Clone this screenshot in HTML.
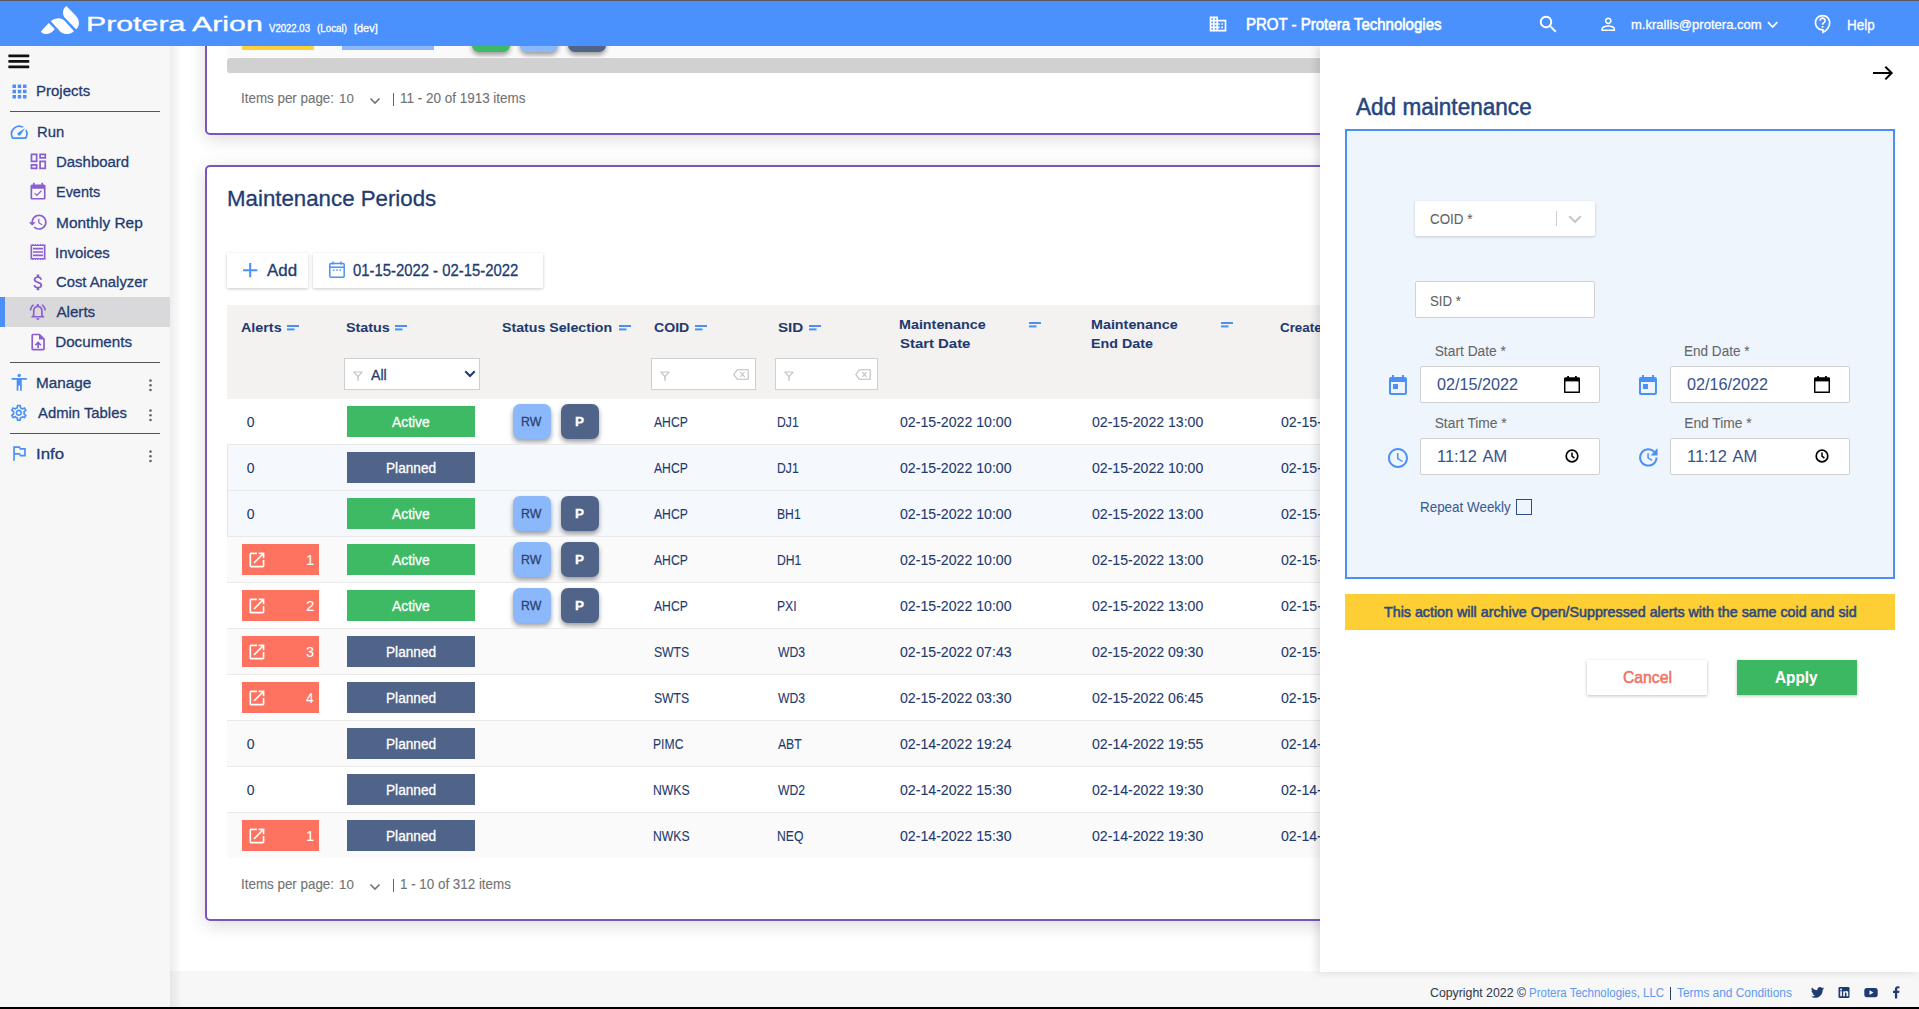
<!DOCTYPE html>
<html><head><meta charset="utf-8"><style>
*{box-sizing:border-box;margin:0;padding:0}
html,body{width:1919px;height:1009px;overflow:hidden;background:#fff;font-family:"Liberation Sans",sans-serif}
body{position:relative}
.a{position:absolute;display:block}
.t{position:absolute;white-space:nowrap;transform-origin:0 0;-webkit-text-stroke:0.3px currentColor}
</style></head><body>
<div class="a" style="left:205px;top:-300px;width:1690px;height:435px;border:2px solid #7a55c2;border-radius:5px;background:#fff;box-shadow:0 4px 18px rgba(0,0,0,0.14)"></div>
<div class="a" style="left:227px;top:40px;width:1100px;height:17px;background:#fafafa;"></div>
<div class="a" style="left:242px;top:40px;width:72px;height:10px;background:#fdd035;"></div>
<div class="a" style="left:342px;top:40px;width:92px;height:10px;background:#8ab8fb;"></div>
<div class="a" style="left:472px;top:17px;width:38px;height:35px;border-radius:7px;background:#3dba63;box-shadow:0 3px 5px rgba(0,0,0,0.38)"></div>
<div class="a" style="left:520px;top:17px;width:38px;height:35px;border-radius:7px;background:#8ab8fb;box-shadow:0 3px 5px rgba(0,0,0,0.38)"></div>
<div class="a" style="left:568px;top:17px;width:38px;height:35px;border-radius:7px;background:#506389;box-shadow:0 3px 5px rgba(0,0,0,0.38)"></div>
<div class="a" style="left:227px;top:58px;width:1100px;height:15px;border-radius:3px;background:#d1d1d1"></div>
<div class="t" style="left:241.09px;top:89.92px;font-size:13.80px;line-height:17px;color:#727272;font-weight:400;transform:scaleX(0.9705);-webkit-text-stroke:0.1px currentColor;">Items per page:</div>
<div class="t" style="left:339.00px;top:91.23px;font-size:13.20px;line-height:16px;color:#727272;font-weight:400;transform:scaleX(1.0076);-webkit-text-stroke:0.1px currentColor;">10</div>
<svg class="a" style="left:369px;top:96.7px;" width="12" height="8" viewBox="0 0 12 8"><path d="M1.5 1.5 L6 6 L10.5 1.5" fill="none" stroke="#727272" stroke-width="1.6"/></svg>
<div class="a" style="left:392.6px;top:92.7px;width:1.1px;height:13px;background:#666;"></div>
<div class="t" style="left:400.09px;top:89.92px;font-size:13.80px;line-height:17px;color:#727272;font-weight:400;transform:scaleX(0.9764);-webkit-text-stroke:0.1px currentColor;">11 - 20 of 1913 items</div>
<div class="a" style="left:205px;top:165px;width:1690px;height:756px;border:2px solid #7a55c2;border-radius:5px;background:#fff;box-shadow:0 4px 18px rgba(0,0,0,0.14)"></div>
<div class="t" style="left:227.02px;top:185.37px;font-size:22.60px;line-height:28px;color:#1f3c72;font-weight:400;transform:scaleX(0.9856);">Maintenance Periods</div>
<div class="a" style="left:227px;top:253px;width:81px;height:35px;background:#fff;box-shadow:0 1px 3px rgba(0,0,0,0.22)"></div>
<div class="a" style="left:313px;top:253px;width:230px;height:35px;background:#fff;box-shadow:0 1px 3px rgba(0,0,0,0.22)"></div>
<svg class="a" style="left:237.89px;top:257.64px;" width="24.43" height="24.43" viewBox="0 0 24 24"><path fill="#4a90f7" d="M19 13h-6v6h-2v-6H5v-2h6V5h2v6h6v2z"/></svg>
<div class="t" style="left:267.00px;top:260.66px;font-size:16.00px;line-height:20px;color:#1f3c72;font-weight:400;transform:scaleX(1.0569);">Add</div>
<svg class="a" style="left:329px;top:261px;" width="16" height="17" viewBox="0 0 16 17"><g fill="none" stroke="#4a90f7" stroke-width="1.5"><rect x="0.8" y="2.6" width="14.4" height="13.6" rx="1.2"/><path d="M0.8 6.2 H15.2"/><path d="M4 0.4 V3.6 M12 0.4 V3.6"/></g><g fill="#4a90f7"><rect x="4" y="8.4" width="1.6" height="1.4"/><rect x="7.2" y="8.4" width="1.6" height="1.4"/><rect x="10.4" y="8.4" width="1.6" height="1.4"/></g></svg>
<div class="t" style="left:353.41px;top:260.39px;font-size:16.20px;line-height:20px;color:#1f3c72;font-weight:400;transform:scaleX(0.9178);">01-15-2022 - 02-15-2022</div>
<div class="a" style="left:227px;top:305px;width:1100px;height:94px;background:#f3f2f1;"></div>
<div class="t" style="left:240.64px;top:319.09px;font-size:13.60px;line-height:17px;color:#1f3a70;font-weight:700;transform:scaleX(1.0538);-webkit-text-stroke:0.05px currentColor;">Alerts</div>
<svg class="a" style="left:287px;top:324.8px;" width="12" height="6" viewBox="0 0 12 6"><g fill="#4a90f7"><rect x="0" y="0" width="12" height="2"/><rect x="0" y="3.4" width="7.5" height="2"/></g></svg>
<div class="t" style="left:346.07px;top:319.09px;font-size:13.60px;line-height:17px;color:#1f3a70;font-weight:700;transform:scaleX(1.0543);-webkit-text-stroke:0.05px currentColor;">Status</div>
<svg class="a" style="left:395px;top:324.8px;" width="12" height="6" viewBox="0 0 12 6"><g fill="#4a90f7"><rect x="0" y="0" width="12" height="2"/><rect x="0" y="3.4" width="7.5" height="2"/></g></svg>
<div class="t" style="left:501.98px;top:319.09px;font-size:13.60px;line-height:17px;color:#1f3a70;font-weight:700;transform:scaleX(1.0413);-webkit-text-stroke:0.05px currentColor;">Status Selection</div>
<svg class="a" style="left:619px;top:324.8px;" width="12" height="6" viewBox="0 0 12 6"><g fill="#4a90f7"><rect x="0" y="0" width="12" height="2"/><rect x="0" y="3.4" width="7.5" height="2"/></g></svg>
<div class="t" style="left:653.54px;top:319.09px;font-size:13.60px;line-height:17px;color:#1f3a70;font-weight:700;transform:scaleX(1.0361);-webkit-text-stroke:0.05px currentColor;">COID</div>
<svg class="a" style="left:695px;top:324.8px;" width="12" height="6" viewBox="0 0 12 6"><g fill="#4a90f7"><rect x="0" y="0" width="12" height="2"/><rect x="0" y="3.4" width="7.5" height="2"/></g></svg>
<div class="t" style="left:777.54px;top:319.09px;font-size:13.60px;line-height:17px;color:#1f3a70;font-weight:700;transform:scaleX(1.1156);-webkit-text-stroke:0.05px currentColor;">SID</div>
<svg class="a" style="left:809px;top:324.8px;" width="12" height="6" viewBox="0 0 12 6"><g fill="#4a90f7"><rect x="0" y="0" width="12" height="2"/><rect x="0" y="3.4" width="7.5" height="2"/></g></svg>
<div class="t" style="left:899.07px;top:315.79px;font-size:13.60px;line-height:17px;color:#1f3a70;font-weight:700;transform:scaleX(1.0532);-webkit-text-stroke:0.05px currentColor;">Maintenance</div>
<svg class="a" style="left:1029px;top:322.3px;" width="12" height="6" viewBox="0 0 12 6"><g fill="#4a90f7"><rect x="0" y="0" width="12" height="2"/><rect x="0" y="3.4" width="7.5" height="2"/></g></svg>
<div class="t" style="left:899.55px;top:334.59px;font-size:13.60px;line-height:17px;color:#1f3a70;font-weight:700;transform:scaleX(1.0966);-webkit-text-stroke:0.05px currentColor;">Start Date</div>
<div class="t" style="left:1091.07px;top:315.79px;font-size:13.60px;line-height:17px;color:#1f3a70;font-weight:700;transform:scaleX(1.0532);-webkit-text-stroke:0.05px currentColor;">Maintenance</div>
<svg class="a" style="left:1221px;top:322.3px;" width="12" height="6" viewBox="0 0 12 6"><g fill="#4a90f7"><rect x="0" y="0" width="12" height="2"/><rect x="0" y="3.4" width="7.5" height="2"/></g></svg>
<div class="t" style="left:1091.07px;top:334.59px;font-size:13.60px;line-height:17px;color:#1f3a70;font-weight:700;transform:scaleX(1.0504);-webkit-text-stroke:0.05px currentColor;">End Date</div>
<div class="t" style="left:1280.07px;top:319.09px;font-size:13.60px;line-height:17px;color:#1f3a70;font-weight:700;transform:scaleX(0.9831);-webkit-text-stroke:0.05px currentColor;">Created</div>
<div class="a" style="left:344px;top:358px;width:136px;height:32px;background:#fff;border:1px solid #cfcfcf"></div>
<svg class="a" style="left:353px;top:371px;" width="10" height="11" viewBox="0 0 10 11"><path d="M0.9 1 H9.1 L5 5.6 Z" fill="none" stroke="#c6c6c6" stroke-width="1.2" stroke-linejoin="round"/><path d="M5 5.2 V9.8" stroke="#c6c6c6" stroke-width="1.5"/></svg>
<div class="t" style="left:370.60px;top:365.40px;font-size:15.00px;line-height:19px;color:#1f3a70;font-weight:400;transform:scaleX(0.9442);">All</div>
<svg class="a" style="left:464px;top:370px;" width="12" height="8" viewBox="0 0 12 8"><path d="M1.3 1.3 L6 6 L10.7 1.3" fill="none" stroke="#1f3a70" stroke-width="2"/></svg>
<div class="a" style="left:651px;top:358px;width:105px;height:32px;background:#fff;border:1px solid #cfcfcf"></div>
<svg class="a" style="left:660px;top:371px;" width="10" height="11" viewBox="0 0 10 11"><path d="M0.9 1 H9.1 L5 5.6 Z" fill="none" stroke="#c6c6c6" stroke-width="1.2" stroke-linejoin="round"/><path d="M5 5.2 V9.8" stroke="#c6c6c6" stroke-width="1.5"/></svg>
<svg class="a" style="left:733px;top:369px;" width="16" height="11" viewBox="0 0 16 11"><path d="M4.5 0.7 H15.2 V10.3 H4.5 L0.7 5.5 Z" fill="none" stroke="#bdbdbd" stroke-width="1.1" stroke-linejoin="round"/><path d="M7.4 3 L11.6 8 M11.6 3 L7.4 8" stroke="#bdbdbd" stroke-width="1.1"/></svg>
<div class="a" style="left:775px;top:358px;width:103px;height:32px;background:#fff;border:1px solid #cfcfcf"></div>
<svg class="a" style="left:784px;top:371px;" width="10" height="11" viewBox="0 0 10 11"><path d="M0.9 1 H9.1 L5 5.6 Z" fill="none" stroke="#c6c6c6" stroke-width="1.2" stroke-linejoin="round"/><path d="M5 5.2 V9.8" stroke="#c6c6c6" stroke-width="1.5"/></svg>
<svg class="a" style="left:855px;top:369px;" width="16" height="11" viewBox="0 0 16 11"><path d="M4.5 0.7 H15.2 V10.3 H4.5 L0.7 5.5 Z" fill="none" stroke="#bdbdbd" stroke-width="1.1" stroke-linejoin="round"/><path d="M7.4 3 L11.6 8 M11.6 3 L7.4 8" stroke="#bdbdbd" stroke-width="1.1"/></svg>
<div class="a" style="left:227px;top:399px;width:1100px;height:45px;background:#fff;"></div>
<div class="t" style="left:246.74px;top:413.15px;font-size:14.00px;line-height:18px;color:#1f3a70;font-weight:400;-webkit-text-stroke:0.1px currentColor;">0</div>
<div class="a" style="left:347px;top:406px;width:128px;height:31px;background:#3dba63;"></div>
<div class="t" style="left:392.20px;top:412.88px;font-size:14.20px;line-height:18px;color:#fff;font-weight:400;transform:scaleX(0.9741);">Active</div>
<div class="a" style="left:513px;top:404px;width:38px;height:35px;border-radius:7px;background:#8ab8fb;box-shadow:0 3px 5px rgba(0,0,0,0.38)"></div>
<div class="a" style="left:561px;top:404px;width:38px;height:35px;border-radius:7px;background:#506389;box-shadow:0 3px 5px rgba(0,0,0,0.38)"></div>
<div class="t" style="left:521.21px;top:413.50px;font-size:13.00px;line-height:16px;color:#2b4370;font-weight:400;transform:scaleX(0.9486);">RW</div>
<div class="t" style="left:575.12px;top:413.50px;font-size:13.00px;line-height:16px;color:#fff;font-weight:700;transform:scaleX(1.0391);">P</div>
<div class="t" style="left:654.40px;top:413.15px;font-size:14.00px;line-height:18px;color:#1f3a70;font-weight:400;transform:scaleX(0.8700);-webkit-text-stroke:0.1px currentColor;">AHCP</div>
<div class="t" style="left:777.03px;top:413.15px;font-size:14.00px;line-height:18px;color:#1f3a70;font-weight:400;transform:scaleX(0.8700);-webkit-text-stroke:0.1px currentColor;">DJ1</div>
<div class="t" style="left:900.23px;top:413.15px;font-size:14.00px;line-height:18px;color:#1f3a70;font-weight:400;transform:scaleX(1.0093);-webkit-text-stroke:0.1px currentColor;">02-15-2022 10:00</div>
<div class="t" style="left:1092.24px;top:413.15px;font-size:14.00px;line-height:18px;color:#1f3a70;font-weight:400;transform:scaleX(1.0066);-webkit-text-stroke:0.1px currentColor;">02-15-2022 13:00</div>
<div class="t" style="left:1280.63px;top:413.15px;font-size:14.00px;line-height:18px;color:#1f3a70;font-weight:400;transform:scaleX(1.0090);-webkit-text-stroke:0.1px currentColor;">02-15-2022 09:58</div>
<div class="a" style="left:227px;top:444px;width:1100px;height:46px;background:#f5f8fd;"></div>
<div class="a" style="left:227px;top:444px;width:1100px;height:1px;background:#e9e9e9;"></div>
<div class="a" style="left:227px;top:444px;width:1px;height:46px;background:#dbe6f7;"></div>
<div class="t" style="left:246.74px;top:459.15px;font-size:14.00px;line-height:18px;color:#1f3a70;font-weight:400;-webkit-text-stroke:0.1px currentColor;">0</div>
<div class="a" style="left:347px;top:452px;width:128px;height:31px;background:#506389;"></div>
<div class="t" style="left:385.71px;top:459.18px;font-size:14.20px;line-height:18px;color:#fff;font-weight:400;transform:scaleX(0.9629);">Planned</div>
<div class="t" style="left:654.40px;top:459.15px;font-size:14.00px;line-height:18px;color:#1f3a70;font-weight:400;transform:scaleX(0.8700);-webkit-text-stroke:0.1px currentColor;">AHCP</div>
<div class="t" style="left:777.03px;top:459.15px;font-size:14.00px;line-height:18px;color:#1f3a70;font-weight:400;transform:scaleX(0.8700);-webkit-text-stroke:0.1px currentColor;">DJ1</div>
<div class="t" style="left:900.23px;top:459.15px;font-size:14.00px;line-height:18px;color:#1f3a70;font-weight:400;transform:scaleX(1.0093);-webkit-text-stroke:0.1px currentColor;">02-15-2022 10:00</div>
<div class="t" style="left:1092.24px;top:459.15px;font-size:14.00px;line-height:18px;color:#1f3a70;font-weight:400;transform:scaleX(1.0066);-webkit-text-stroke:0.1px currentColor;">02-15-2022 10:00</div>
<div class="t" style="left:1280.63px;top:459.15px;font-size:14.00px;line-height:18px;color:#1f3a70;font-weight:400;transform:scaleX(1.0097);-webkit-text-stroke:0.1px currentColor;">02-15-2022 09:41</div>
<div class="a" style="left:227px;top:490px;width:1100px;height:46px;background:#f5f8fd;"></div>
<div class="a" style="left:227px;top:490px;width:1100px;height:1px;background:#e9e9e9;"></div>
<div class="a" style="left:227px;top:490px;width:1px;height:46px;background:#dbe6f7;"></div>
<div class="t" style="left:246.74px;top:505.15px;font-size:14.00px;line-height:18px;color:#1f3a70;font-weight:400;-webkit-text-stroke:0.1px currentColor;">0</div>
<div class="a" style="left:347px;top:498px;width:128px;height:31px;background:#3dba63;"></div>
<div class="t" style="left:392.20px;top:504.88px;font-size:14.20px;line-height:18px;color:#fff;font-weight:400;transform:scaleX(0.9741);">Active</div>
<div class="a" style="left:513px;top:496px;width:38px;height:35px;border-radius:7px;background:#8ab8fb;box-shadow:0 3px 5px rgba(0,0,0,0.38)"></div>
<div class="a" style="left:561px;top:496px;width:38px;height:35px;border-radius:7px;background:#506389;box-shadow:0 3px 5px rgba(0,0,0,0.38)"></div>
<div class="t" style="left:521.21px;top:505.50px;font-size:13.00px;line-height:16px;color:#2b4370;font-weight:400;transform:scaleX(0.9486);">RW</div>
<div class="t" style="left:575.12px;top:505.50px;font-size:13.00px;line-height:16px;color:#fff;font-weight:700;transform:scaleX(1.0391);">P</div>
<div class="t" style="left:654.40px;top:505.15px;font-size:14.00px;line-height:18px;color:#1f3a70;font-weight:400;transform:scaleX(0.8700);-webkit-text-stroke:0.1px currentColor;">AHCP</div>
<div class="t" style="left:777.03px;top:505.15px;font-size:14.00px;line-height:18px;color:#1f3a70;font-weight:400;transform:scaleX(0.8700);-webkit-text-stroke:0.1px currentColor;">BH1</div>
<div class="t" style="left:900.23px;top:505.15px;font-size:14.00px;line-height:18px;color:#1f3a70;font-weight:400;transform:scaleX(1.0093);-webkit-text-stroke:0.1px currentColor;">02-15-2022 10:00</div>
<div class="t" style="left:1092.24px;top:505.15px;font-size:14.00px;line-height:18px;color:#1f3a70;font-weight:400;transform:scaleX(1.0066);-webkit-text-stroke:0.1px currentColor;">02-15-2022 13:00</div>
<div class="t" style="left:1280.63px;top:505.15px;font-size:14.00px;line-height:18px;color:#1f3a70;font-weight:400;transform:scaleX(1.0103);-webkit-text-stroke:0.1px currentColor;">02-15-2022 09:37</div>
<div class="a" style="left:227px;top:536px;width:1100px;height:46px;background:#fafafa;"></div>
<div class="a" style="left:227px;top:536px;width:1100px;height:1px;background:#e9e9e9;"></div>
<div class="a" style="left:242px;top:544px;width:77px;height:31px;background:#fe735f;"></div>
<svg class="a" style="left:247.07px;top:549.97px;" width="19.87" height="19.87" viewBox="0 0 24 24"><path fill="#fff" d="M19 19H5V5h7V3H5c-1.11 0-2 .9-2 2v14c0 1.1.89 2 2 2h14c1.1 0 2-.9 2-2v-7h-2v7zM14 3v2h3.59l-9.83 9.83 1.41 1.41L19 6.41V10h2V3h-7z"/></svg>
<div class="t" style="left:305.91px;top:551.15px;font-size:14.00px;line-height:18px;color:#fff;font-weight:400;transform:scaleX(1.0345);-webkit-text-stroke:0.05px currentColor;">1</div>
<div class="a" style="left:347px;top:544px;width:128px;height:31px;background:#3dba63;"></div>
<div class="t" style="left:392.20px;top:550.88px;font-size:14.20px;line-height:18px;color:#fff;font-weight:400;transform:scaleX(0.9741);">Active</div>
<div class="a" style="left:513px;top:542px;width:38px;height:35px;border-radius:7px;background:#8ab8fb;box-shadow:0 3px 5px rgba(0,0,0,0.38)"></div>
<div class="a" style="left:561px;top:542px;width:38px;height:35px;border-radius:7px;background:#506389;box-shadow:0 3px 5px rgba(0,0,0,0.38)"></div>
<div class="t" style="left:521.21px;top:551.50px;font-size:13.00px;line-height:16px;color:#2b4370;font-weight:400;transform:scaleX(0.9486);">RW</div>
<div class="t" style="left:575.12px;top:551.50px;font-size:13.00px;line-height:16px;color:#fff;font-weight:700;transform:scaleX(1.0391);">P</div>
<div class="t" style="left:654.40px;top:551.15px;font-size:14.00px;line-height:18px;color:#1f3a70;font-weight:400;transform:scaleX(0.8700);-webkit-text-stroke:0.1px currentColor;">AHCP</div>
<div class="t" style="left:777.03px;top:551.15px;font-size:14.00px;line-height:18px;color:#1f3a70;font-weight:400;transform:scaleX(0.8700);-webkit-text-stroke:0.1px currentColor;">DH1</div>
<div class="t" style="left:900.23px;top:551.15px;font-size:14.00px;line-height:18px;color:#1f3a70;font-weight:400;transform:scaleX(1.0093);-webkit-text-stroke:0.1px currentColor;">02-15-2022 10:00</div>
<div class="t" style="left:1092.24px;top:551.15px;font-size:14.00px;line-height:18px;color:#1f3a70;font-weight:400;transform:scaleX(1.0066);-webkit-text-stroke:0.1px currentColor;">02-15-2022 13:00</div>
<div class="t" style="left:1280.63px;top:551.15px;font-size:14.00px;line-height:18px;color:#1f3a70;font-weight:400;transform:scaleX(1.0103);-webkit-text-stroke:0.1px currentColor;">02-15-2022 09:37</div>
<div class="a" style="left:227px;top:582px;width:1100px;height:46px;background:#fff;"></div>
<div class="a" style="left:227px;top:582px;width:1100px;height:1px;background:#e9e9e9;"></div>
<div class="a" style="left:242px;top:590px;width:77px;height:31px;background:#fe735f;"></div>
<svg class="a" style="left:247.07px;top:595.97px;" width="19.87" height="19.87" viewBox="0 0 24 24"><path fill="#fff" d="M19 19H5V5h7V3H5c-1.11 0-2 .9-2 2v14c0 1.1.89 2 2 2h14c1.1 0 2-.9 2-2v-7h-2v7zM14 3v2h3.59l-9.83 9.83 1.41 1.41L19 6.41V10h2V3h-7z"/></svg>
<div class="t" style="left:305.75px;top:597.15px;font-size:14.00px;line-height:18px;color:#fff;font-weight:400;transform:scaleX(1.0675);-webkit-text-stroke:0.05px currentColor;">2</div>
<div class="a" style="left:347px;top:590px;width:128px;height:31px;background:#3dba63;"></div>
<div class="t" style="left:392.20px;top:596.88px;font-size:14.20px;line-height:18px;color:#fff;font-weight:400;transform:scaleX(0.9741);">Active</div>
<div class="a" style="left:513px;top:588px;width:38px;height:35px;border-radius:7px;background:#8ab8fb;box-shadow:0 3px 5px rgba(0,0,0,0.38)"></div>
<div class="a" style="left:561px;top:588px;width:38px;height:35px;border-radius:7px;background:#506389;box-shadow:0 3px 5px rgba(0,0,0,0.38)"></div>
<div class="t" style="left:521.21px;top:597.50px;font-size:13.00px;line-height:16px;color:#2b4370;font-weight:400;transform:scaleX(0.9486);">RW</div>
<div class="t" style="left:575.12px;top:597.50px;font-size:13.00px;line-height:16px;color:#fff;font-weight:700;transform:scaleX(1.0391);">P</div>
<div class="t" style="left:654.40px;top:597.15px;font-size:14.00px;line-height:18px;color:#1f3a70;font-weight:400;transform:scaleX(0.8700);-webkit-text-stroke:0.1px currentColor;">AHCP</div>
<div class="t" style="left:777.03px;top:597.15px;font-size:14.00px;line-height:18px;color:#1f3a70;font-weight:400;transform:scaleX(0.8700);-webkit-text-stroke:0.1px currentColor;">PXI</div>
<div class="t" style="left:900.23px;top:597.15px;font-size:14.00px;line-height:18px;color:#1f3a70;font-weight:400;transform:scaleX(1.0093);-webkit-text-stroke:0.1px currentColor;">02-15-2022 10:00</div>
<div class="t" style="left:1092.24px;top:597.15px;font-size:14.00px;line-height:18px;color:#1f3a70;font-weight:400;transform:scaleX(1.0066);-webkit-text-stroke:0.1px currentColor;">02-15-2022 13:00</div>
<div class="t" style="left:1280.63px;top:597.15px;font-size:14.00px;line-height:18px;color:#1f3a70;font-weight:400;transform:scaleX(1.0103);-webkit-text-stroke:0.1px currentColor;">02-15-2022 09:37</div>
<div class="a" style="left:227px;top:628px;width:1100px;height:46px;background:#fafafa;"></div>
<div class="a" style="left:227px;top:628px;width:1100px;height:1px;background:#e9e9e9;"></div>
<div class="a" style="left:242px;top:636px;width:77px;height:31px;background:#fe735f;"></div>
<svg class="a" style="left:247.07px;top:641.97px;" width="19.87" height="19.87" viewBox="0 0 24 24"><path fill="#fff" d="M19 19H5V5h7V3H5c-1.11 0-2 .9-2 2v14c0 1.1.89 2 2 2h14c1.1 0 2-.9 2-2v-7h-2v7zM14 3v2h3.59l-9.83 9.83 1.41 1.41L19 6.41V10h2V3h-7z"/></svg>
<div class="t" style="left:305.93px;top:643.15px;font-size:14.00px;line-height:18px;color:#fff;font-weight:400;transform:scaleX(1.0226);-webkit-text-stroke:0.05px currentColor;">3</div>
<div class="a" style="left:347px;top:636px;width:128px;height:31px;background:#506389;"></div>
<div class="t" style="left:385.71px;top:643.18px;font-size:14.20px;line-height:18px;color:#fff;font-weight:400;transform:scaleX(0.9629);">Planned</div>
<div class="t" style="left:653.85px;top:643.15px;font-size:14.00px;line-height:18px;color:#1f3a70;font-weight:400;transform:scaleX(0.8700);-webkit-text-stroke:0.1px currentColor;">SWTS</div>
<div class="t" style="left:777.94px;top:643.15px;font-size:14.00px;line-height:18px;color:#1f3a70;font-weight:400;transform:scaleX(0.8700);-webkit-text-stroke:0.1px currentColor;">WD3</div>
<div class="t" style="left:900.23px;top:643.15px;font-size:14.00px;line-height:18px;color:#1f3a70;font-weight:400;transform:scaleX(1.0100);-webkit-text-stroke:0.1px currentColor;">02-15-2022 07:43</div>
<div class="t" style="left:1092.24px;top:643.15px;font-size:14.00px;line-height:18px;color:#1f3a70;font-weight:400;transform:scaleX(1.0066);-webkit-text-stroke:0.1px currentColor;">02-15-2022 09:30</div>
<div class="t" style="left:1280.63px;top:643.15px;font-size:14.00px;line-height:18px;color:#1f3a70;font-weight:400;transform:scaleX(1.0090);-webkit-text-stroke:0.1px currentColor;">02-15-2022 07:43</div>
<div class="a" style="left:227px;top:674px;width:1100px;height:46px;background:#fff;"></div>
<div class="a" style="left:227px;top:674px;width:1100px;height:1px;background:#e9e9e9;"></div>
<div class="a" style="left:242px;top:682px;width:77px;height:31px;background:#fe735f;"></div>
<svg class="a" style="left:247.07px;top:687.97px;" width="19.87" height="19.87" viewBox="0 0 24 24"><path fill="#fff" d="M19 19H5V5h7V3H5c-1.11 0-2 .9-2 2v14c0 1.1.89 2 2 2h14c1.1 0 2-.9 2-2v-7h-2v7zM14 3v2h3.59l-9.83 9.83 1.41 1.41L19 6.41V10h2V3h-7z"/></svg>
<div class="t" style="left:306.23px;top:689.15px;font-size:14.00px;line-height:18px;color:#fff;font-weight:400;transform:scaleX(0.9618);-webkit-text-stroke:0.05px currentColor;">4</div>
<div class="a" style="left:347px;top:682px;width:128px;height:31px;background:#506389;"></div>
<div class="t" style="left:385.71px;top:689.18px;font-size:14.20px;line-height:18px;color:#fff;font-weight:400;transform:scaleX(0.9629);">Planned</div>
<div class="t" style="left:653.85px;top:689.15px;font-size:14.00px;line-height:18px;color:#1f3a70;font-weight:400;transform:scaleX(0.8700);-webkit-text-stroke:0.1px currentColor;">SWTS</div>
<div class="t" style="left:777.94px;top:689.15px;font-size:14.00px;line-height:18px;color:#1f3a70;font-weight:400;transform:scaleX(0.8700);-webkit-text-stroke:0.1px currentColor;">WD3</div>
<div class="t" style="left:900.23px;top:689.15px;font-size:14.00px;line-height:18px;color:#1f3a70;font-weight:400;transform:scaleX(1.0093);-webkit-text-stroke:0.1px currentColor;">02-15-2022 03:30</div>
<div class="t" style="left:1092.24px;top:689.15px;font-size:14.00px;line-height:18px;color:#1f3a70;font-weight:400;transform:scaleX(1.0072);-webkit-text-stroke:0.1px currentColor;">02-15-2022 06:45</div>
<div class="t" style="left:1280.64px;top:689.15px;font-size:14.00px;line-height:18px;color:#1f3a70;font-weight:400;transform:scaleX(1.0084);-webkit-text-stroke:0.1px currentColor;">02-15-2022 03:30</div>
<div class="a" style="left:227px;top:720px;width:1100px;height:46px;background:#fafafa;"></div>
<div class="a" style="left:227px;top:720px;width:1100px;height:1px;background:#e9e9e9;"></div>
<div class="t" style="left:246.74px;top:735.15px;font-size:14.00px;line-height:18px;color:#1f3a70;font-weight:400;-webkit-text-stroke:0.1px currentColor;">0</div>
<div class="a" style="left:347px;top:728px;width:128px;height:31px;background:#506389;"></div>
<div class="t" style="left:385.71px;top:735.18px;font-size:14.20px;line-height:18px;color:#fff;font-weight:400;transform:scaleX(0.9629);">Planned</div>
<div class="t" style="left:653.43px;top:735.15px;font-size:14.00px;line-height:18px;color:#1f3a70;font-weight:400;transform:scaleX(0.8700);-webkit-text-stroke:0.1px currentColor;">PIMC</div>
<div class="t" style="left:778.00px;top:735.15px;font-size:14.00px;line-height:18px;color:#1f3a70;font-weight:400;transform:scaleX(0.8700);-webkit-text-stroke:0.1px currentColor;">ABT</div>
<div class="t" style="left:900.24px;top:735.15px;font-size:14.00px;line-height:18px;color:#1f3a70;font-weight:400;transform:scaleX(1.0087);-webkit-text-stroke:0.1px currentColor;">02-14-2022 19:24</div>
<div class="t" style="left:1092.24px;top:735.15px;font-size:14.00px;line-height:18px;color:#1f3a70;font-weight:400;transform:scaleX(1.0072);-webkit-text-stroke:0.1px currentColor;">02-14-2022 19:55</div>
<div class="t" style="left:1280.64px;top:735.15px;font-size:14.00px;line-height:18px;color:#1f3a70;font-weight:400;transform:scaleX(1.0078);-webkit-text-stroke:0.1px currentColor;">02-14-2022 19:24</div>
<div class="a" style="left:227px;top:766px;width:1100px;height:46px;background:#fff;"></div>
<div class="a" style="left:227px;top:766px;width:1100px;height:1px;background:#e9e9e9;"></div>
<div class="t" style="left:246.74px;top:781.15px;font-size:14.00px;line-height:18px;color:#1f3a70;font-weight:400;-webkit-text-stroke:0.1px currentColor;">0</div>
<div class="a" style="left:347px;top:774px;width:128px;height:31px;background:#506389;"></div>
<div class="t" style="left:385.71px;top:781.18px;font-size:14.20px;line-height:18px;color:#fff;font-weight:400;transform:scaleX(0.9629);">Planned</div>
<div class="t" style="left:653.43px;top:781.15px;font-size:14.00px;line-height:18px;color:#1f3a70;font-weight:400;transform:scaleX(0.8700);-webkit-text-stroke:0.1px currentColor;">NWKS</div>
<div class="t" style="left:777.94px;top:781.15px;font-size:14.00px;line-height:18px;color:#1f3a70;font-weight:400;transform:scaleX(0.8700);-webkit-text-stroke:0.1px currentColor;">WD2</div>
<div class="t" style="left:900.23px;top:781.15px;font-size:14.00px;line-height:18px;color:#1f3a70;font-weight:400;transform:scaleX(1.0093);-webkit-text-stroke:0.1px currentColor;">02-14-2022 15:30</div>
<div class="t" style="left:1092.24px;top:781.15px;font-size:14.00px;line-height:18px;color:#1f3a70;font-weight:400;transform:scaleX(1.0066);-webkit-text-stroke:0.1px currentColor;">02-14-2022 19:30</div>
<div class="t" style="left:1280.64px;top:781.15px;font-size:14.00px;line-height:18px;color:#1f3a70;font-weight:400;transform:scaleX(1.0084);-webkit-text-stroke:0.1px currentColor;">02-14-2022 15:30</div>
<div class="a" style="left:227px;top:812px;width:1100px;height:46px;background:#fafafa;"></div>
<div class="a" style="left:227px;top:812px;width:1100px;height:1px;background:#e9e9e9;"></div>
<div class="a" style="left:242px;top:820px;width:77px;height:31px;background:#fe735f;"></div>
<svg class="a" style="left:247.07px;top:825.97px;" width="19.87" height="19.87" viewBox="0 0 24 24"><path fill="#fff" d="M19 19H5V5h7V3H5c-1.11 0-2 .9-2 2v14c0 1.1.89 2 2 2h14c1.1 0 2-.9 2-2v-7h-2v7zM14 3v2h3.59l-9.83 9.83 1.41 1.41L19 6.41V10h2V3h-7z"/></svg>
<div class="t" style="left:305.91px;top:827.15px;font-size:14.00px;line-height:18px;color:#fff;font-weight:400;transform:scaleX(1.0345);-webkit-text-stroke:0.05px currentColor;">1</div>
<div class="a" style="left:347px;top:820px;width:128px;height:31px;background:#506389;"></div>
<div class="t" style="left:385.71px;top:827.18px;font-size:14.20px;line-height:18px;color:#fff;font-weight:400;transform:scaleX(0.9629);">Planned</div>
<div class="t" style="left:653.43px;top:827.15px;font-size:14.00px;line-height:18px;color:#1f3a70;font-weight:400;transform:scaleX(0.8700);-webkit-text-stroke:0.1px currentColor;">NWKS</div>
<div class="t" style="left:777.03px;top:827.15px;font-size:14.00px;line-height:18px;color:#1f3a70;font-weight:400;transform:scaleX(0.8700);-webkit-text-stroke:0.1px currentColor;">NEQ</div>
<div class="t" style="left:900.23px;top:827.15px;font-size:14.00px;line-height:18px;color:#1f3a70;font-weight:400;transform:scaleX(1.0093);-webkit-text-stroke:0.1px currentColor;">02-14-2022 15:30</div>
<div class="t" style="left:1092.24px;top:827.15px;font-size:14.00px;line-height:18px;color:#1f3a70;font-weight:400;transform:scaleX(1.0066);-webkit-text-stroke:0.1px currentColor;">02-14-2022 19:30</div>
<div class="t" style="left:1280.64px;top:827.15px;font-size:14.00px;line-height:18px;color:#1f3a70;font-weight:400;transform:scaleX(1.0084);-webkit-text-stroke:0.1px currentColor;">02-14-2022 15:30</div>
<div class="t" style="left:241.09px;top:875.92px;font-size:13.80px;line-height:17px;color:#727272;font-weight:400;transform:scaleX(0.9705);-webkit-text-stroke:0.1px currentColor;">Items per page:</div>
<div class="t" style="left:339.00px;top:877.23px;font-size:13.20px;line-height:16px;color:#727272;font-weight:400;transform:scaleX(1.0076);-webkit-text-stroke:0.1px currentColor;">10</div>
<svg class="a" style="left:369px;top:882.7px;" width="12" height="8" viewBox="0 0 12 8"><path d="M1.5 1.5 L6 6 L10.5 1.5" fill="none" stroke="#727272" stroke-width="1.6"/></svg>
<div class="a" style="left:392.6px;top:878.7px;width:1.1px;height:13px;background:#666;"></div>
<div class="t" style="left:400.10px;top:875.92px;font-size:13.80px;line-height:17px;color:#727272;font-weight:400;transform:scaleX(0.9703);-webkit-text-stroke:0.1px currentColor;">1 - 10 of 312 items</div>
<div class="a" style="left:0px;top:46px;width:170px;height:963px;background:#f7f7f7;"></div>
<svg class="a" style="left:8px;top:54px;" width="22" height="15" viewBox="0 0 22 15"><g fill="#111"><rect x="0.3" y="0.6" width="21" height="2.6" rx="0.8"/><rect x="0.3" y="6.1" width="21" height="2.6" rx="0.8"/><rect x="0.3" y="11.6" width="21" height="2.6" rx="0.8"/></g></svg>
<svg class="a" style="left:8.50px;top:80.50px;" width="21.00" height="21.00" viewBox="0 0 24 24"><path fill="#4a90f7" d="M4 8h4V4H4v4zm6 12h4v-4h-4v4zm-6 0h4v-4H4v4zm0-6h4v-4H4v4zm6 0h4v-4h-4v4zm6-10v4h4V4h-4zm-6 4h4V4h-4v4zm6 6h4v-4h-4v4zm0 6h4v-4h-4v4z"/></svg>
<div class="t" style="left:36.30px;top:80.93px;font-size:15.20px;line-height:19px;color:#1f3c72;font-weight:400;transform:scaleX(0.9883);">Projects</div>
<div class="a" style="left:10px;top:111px;width:150px;height:1.3px;background:#555;"></div>
<svg class="a" style="left:8.52px;top:121.76px;" width="20.44" height="20.44" viewBox="0 0 24 24"><path fill="#4a90f7" d="M20.38 8.57l-1.23 1.85a8 8 0 0 1-.22 7.58H5.07A8 8 0 0 1 15.58 6.85l1.85-1.23A10 10 0 0 0 3.35 19a2 2 0 0 0 1.72 1h13.85a2 2 0 0 0 1.74-1 10 10 0 0 0-.27-10.44zm-9.79 6.84a2 2 0 0 0 2.830 0l5.66-8.49-8.49 5.66a2 2 0 0 0 0 2.83z"/></svg>
<div class="t" style="left:36.82px;top:121.73px;font-size:15.20px;line-height:19px;color:#1f3c72;font-weight:400;transform:scaleX(0.9732);">Run</div>
<svg class="a" style="left:27.63px;top:151.48px;" width="20.73" height="20.73" viewBox="0 0 24 24"><path fill="#8a5dd1" d="M19 5v2h-4V5h4M9 5v6H5V5h4m10 8v6h-4v-6h4M9 17v2H5v-2h4M21 3h-8v6h8V3zM11 3H3v10h8V3zm10 8h-8v10h8V11zm-10 4H3v6h8v-6z"/></svg>
<div class="t" style="left:55.80px;top:152.23px;font-size:15.20px;line-height:19px;color:#1f3c72;font-weight:400;transform:scaleX(0.9844);">Dashboard</div>
<svg class="a" style="left:27.75px;top:181.79px;" width="20.09" height="20.09" viewBox="0 0 24 24"><path fill="#8a5dd1" d="M16.53 11.06L15.47 10l-4.88 4.88-2.120-2.12-1.06 1.06L10.59 17l5.94-5.94zM19 3h-1V1h-2v2H8V1H6v2H5c-1.11 0-1.99.9-1.99 2L3 19c0 1.1.89 2 2 2h14c1.1 0 2-.9 2-2V5c0-1.1-.9-2-2-2zm0 16H5V8h14v11z"/></svg>
<div class="t" style="left:55.84px;top:182.23px;font-size:15.20px;line-height:19px;color:#1f3c72;font-weight:400;transform:scaleX(0.9510);">Events</div>
<svg class="a" style="left:27.88px;top:211.75px;" width="20.39" height="20.39" viewBox="0 0 24 24"><path fill="#8a5dd1" d="M13 3c-4.97 0-9 4.03-9 9H1l3.89 3.89.07.14L9 12H6c0-3.87 3.13-7 7-7s7 3.13 7 7-3.13 7-7 7c-1.93 0-3.68-.79-4.94-2.06l-1.42 1.42C8.270 19.99 10.51 21 13 21c4.97 0 9-4.03 9-9s-4.03-9-9-9zm-1 5v5l4.28 2.54.72-1.21-3.5-2.08V8H12z"/></svg>
<div class="t" style="left:55.76px;top:212.73px;font-size:15.20px;line-height:19px;color:#1f3c72;font-weight:400;transform:scaleX(1.0177);">Monthly Rep</div>
<svg class="a" style="left:28.10px;top:241.50px;" width="20.00" height="20.00" viewBox="0 0 24 24"><path fill="#8a5dd1" d="M19.5 3.5L18 2l-1.5 1.5L15 2l-1.5 1.5L12 2l-1.5 1.5L9 2 7.5 3.5 6 2 4.5 3.5 3 2v20l1.5-1.5L6 22l1.5-1.5L9 22l1.5-1.5L12 22l1.5-1.5L15 22l1.5-1.5L18 22l1.5-1.5L21 22V2l-1.5 1.5zM19 19.09H5V4.91h14v14.18zM6 15h12v2H6zm0-4h12v2H6zm0-4h12v2H6z"/></svg>
<div class="t" style="left:55.05px;top:242.63px;font-size:15.20px;line-height:19px;color:#1f3c72;font-weight:400;transform:scaleX(0.9836);">Invoices</div>
<div class="a" style="left:5px;top:297px;width:165px;height:30px;background:#d9d9db;"></div>
<div class="a" style="left:0px;top:297px;width:5px;height:30px;background:#4a90f7;"></div>
<svg class="a" style="left:27.68px;top:271.52px;" width="20.76" height="20.76" viewBox="0 0 24 24"><path fill="#8a5dd1" d="M11.8 10.9c-2.27-.59-3-1.2-3-2.15 0-1.09 1.01-1.85 2.7-1.850 1.78 0 2.44.85 2.5 2.1h2.21c-.07-1.72-1.12-3.3-3.21-3.81V3h-3v2.16c-1.94.42-3.5 1.68-3.5 3.61 0 2.31 1.91 3.46 4.7 4.13 2.5.6 3 1.48 3 2.41 0 .69-.49 1.79-2.7 1.79-2.06 0-2.87-.92-2.98-2.1h-2.2c.12 2.19 1.76 3.42 3.68 3.83V21h3v-2.15c1.95-.37 3.5-1.5 3.5-3.55 0-2.84-2.43-3.81-4.7-4.4z"/></svg>
<div class="t" style="left:55.66px;top:272.23px;font-size:15.20px;line-height:19px;color:#1f3c72;font-weight:400;transform:scaleX(0.9750);">Cost Analyzer</div>
<svg class="a" style="left:28.12px;top:301.87px;" width="19.65" height="19.65" viewBox="0 0 24 24"><path fill="#8a5dd1" d="M7.58 4.08L6.15 2.65C3.75 4.48 2.17 7.3 2.03 10.5h2c.15-2.65 1.51-4.97 3.55-6.42zm12.39 6.42h2c-.15-3.2-1.73-6.02-4.12-7.85l-1.42 1.43c2.020 1.45 3.39 3.77 3.54 6.42zM18 11c0-3.07-1.64-5.64-4.5-6.32V4c0-.83-.67-1.5-1.5-1.5s-1.5.67-1.5 1.5v.68C7.63 5.36 6 7.92 6 11v5l-2 2v1h16v-1l-2-2v-5zm-2 6H8v-6c0-2.48 1.51-4.5 4-4.5s4 2.02 4 4.5v6zm-4 5c1.1 0 2-.9 2-2h-4c0 1.1.89 2 2 2z"/></svg>
<div class="t" style="left:56.40px;top:302.43px;font-size:15.20px;line-height:19px;color:#1f3c72;font-weight:400;">Alerts</div>
<svg class="a" style="left:28.13px;top:332.18px;" width="20.24" height="20.24" viewBox="0 0 24 24"><path fill="#8a5dd1" d="M14 2H6c-1.1 0-1.99.9-1.99 2L4 20c0 1.1.89 2 1.99 2H18c1.1 0 2-.9 2-2V8l-6-6zm4 18H6V4h7v5h5v11zM8 15.01l1.41 1.41L11 14.84V19h2v-4.16l1.59 1.590L16 15.01 12.01 11 8 15.01z"/></svg>
<div class="t" style="left:55.19px;top:332.23px;font-size:15.20px;line-height:19px;color:#1f3c72;font-weight:400;">Documents</div>
<div class="a" style="left:10px;top:362px;width:150px;height:1.3px;background:#555;"></div>
<svg class="a" style="left:8.63px;top:372.03px;" width="20.43" height="20.43" viewBox="0 0 24 24"><path fill="#4a90f7" d="M12 2c1.1 0 2 .9 2 2s-.9 2-2 2-2-.9-2-2 .9-2 2-2zm9 7h-6v13h-2v-6h-2v6H9V9H3V7h18v2z"/></svg>
<div class="t" style="left:36.38px;top:373.43px;font-size:15.20px;line-height:19px;color:#1f3c72;font-weight:400;transform:scaleX(1.0066);">Manage</div>
<svg class="a" style="left:9.18px;top:403.03px;" width="19.65" height="19.65" viewBox="0 0 24 24"><path fill="#4a90f7" d="M19.43 12.98c.04-.32.07-.64.07-.98 0-.34-.03-.66-.07-.98l2.11-1.65c.19-.15.24-.42.12-.64l-2-3.46c-.09-.16-.26-.25-.44-.25-.06 0-.12.01-.17.03l-2.49 1c-.52-.4-1.08-.73-1.69-.98l-.38-2.65C14.46 2.18 14.25 2 14 2h-4c-.25 0-.46.18-.49.42l-.38 2.65c-.61.25-1.17.59-1.69.98l-2.49-1c-.06-.02-.12-.03-.18-.03-.17 0-.34.09-.43.25l-2 3.46c-.13.22-.07.49.12.64l2.11 1.65c-.04.32-.07.65-.07.98 0 .33.03.66.07.98l-2.11 1.65c-.19.15-.24.42-.12.64l2 3.46c.09.16.26.25.44.25.06 0 .12-.01.17-.03l2.49-1c.52.4 1.08.73 1.69.98l.38 2.65c.03.24.24.42.49.42h4c.25 0 .46-.18.49-.42l.38-2.65c.61-.25 1.17-.59 1.69-.98l2.49 1c.06.02.12.03.18.03.17 0 .34-.09.43-.25l2-3.46c.12-.22.07-.49-.12-.64l-2.11-1.65zm-1.98-1.71c.04.31.05.52.05.73 0 .21-.02.43-.05.73l-.14 1.13.89.7 1.08.84-.7 1.21-1.27-.51-1.04-.42-.9.68c-.43.32-.84.56-1.25.73l-1.06.43-.16 1.13-.2 1.35h-1.4l-.19-1.35-.16-1.13-1.06-.43c-.43-.18-.83-.41-1.23-.71l-.91-.7-1.06.43-1.27.51-.7-1.21 1.08-.84.89-.7-.14-1.13c-.03-.31-.05-.54-.05-.74s.02-.43.05-.73l.14-1.13-.89-.7-1.08-.84.7-1.21 1.27.51 1.04.42.9-.68c.43-.32.84-.56 1.25-.73l1.06-.43.16-1.13.2-1.35h1.39l.19 1.35.16 1.13 1.06.43c.43.18.83.41 1.23.71l.91.7 1.06-.43 1.27-.51.7 1.21-1.07.85-.89.7.14 1.13zM12 8c-2.21 0-4 1.79-4 4s1.79 4 4 4 4-1.79 4-4-1.79-4-4-4zm0 6c-1.1 0-2-.9-2-2s.9-2 2-2 2 .9 2 2-.9 2-2 2z"/></svg>
<div class="t" style="left:37.60px;top:403.43px;font-size:15.20px;line-height:19px;color:#1f3c72;font-weight:400;transform:scaleX(0.9774);">Admin Tables</div>
<div class="a" style="left:10px;top:433px;width:150px;height:1.3px;background:#555;"></div>
<svg class="a" style="left:9.19px;top:443.34px;" width="20.17" height="20.17" viewBox="0 0 24 24"><path fill="#4a90f7" d="M14 6l-1-2H5v17h2v-7h5l1 2h7V6h-6zm4 8h-4l-1-2H7V6h5l1 2h5v6z"/></svg>
<div class="t" style="left:36.08px;top:444.03px;font-size:15.20px;line-height:19px;color:#1f3c72;font-weight:400;transform:scaleX(1.1101);">Info</div>
<svg class="a" style="left:148px;top:379px;" width="5" height="13" viewBox="0 0 5 13"><g fill="#666"><circle cx="2.5" cy="1.6" r="1.3"/><circle cx="2.5" cy="6.3" r="1.3"/><circle cx="2.5" cy="11" r="1.3"/></g></svg>
<svg class="a" style="left:148px;top:409px;" width="5" height="13" viewBox="0 0 5 13"><g fill="#666"><circle cx="2.5" cy="1.6" r="1.3"/><circle cx="2.5" cy="6.3" r="1.3"/><circle cx="2.5" cy="11" r="1.3"/></g></svg>
<svg class="a" style="left:148px;top:450px;" width="5" height="13" viewBox="0 0 5 13"><g fill="#666"><circle cx="2.5" cy="1.6" r="1.3"/><circle cx="2.5" cy="6.3" r="1.3"/><circle cx="2.5" cy="11" r="1.3"/></g></svg>
<div class="a" style="left:170px;top:971px;width:1749px;height:36px;background:#f7f7f7;"></div>
<div class="t" style="left:1429.98px;top:984.07px;font-size:13.66px;line-height:17px;color:#333a48;font-weight:400;transform:scaleX(0.9014);-webkit-text-stroke:0.05px currentColor;">Copyright 2022 ©</div>
<div class="t" style="left:1528.88px;top:984.07px;font-size:13.66px;line-height:17px;color:#5e9bf2;font-weight:400;transform:scaleX(0.8412);-webkit-text-stroke:0.05px currentColor;">Protera Technologies, LLC</div>
<div class="a" style="left:1669.5px;top:987px;width:1px;height:13px;background:#2b3f63;"></div>
<div class="t" style="left:1676.96px;top:984.07px;font-size:13.66px;line-height:17px;color:#5e9bf2;font-weight:400;transform:scaleX(0.8693);-webkit-text-stroke:0.05px currentColor;">Terms and Conditions</div>
<svg class="a" style="left:1811px;top:987px;" width="13" height="11" viewBox="0 0 13 11"><path fill="#1f3c72" d="M13 1.3c-.5.2-1 .4-1.5.4.6-.3 1-.9 1.2-1.5-.5.3-1.1.5-1.7.7C10.5.3 9.8 0 9 0 7.5 0 6.3 1.2 6.3 2.7c0 .2 0 .4.1.6C4.2 3.2 2.2 2.1.9.5.6.9.5 1.4.5 1.9c0 .9.5 1.8 1.2 2.2-.4 0-.9-.1-1.2-.3 0 1.3.9 2.4 2.2 2.7-.4.1-.8.1-1.2 0 .3 1.1 1.3 1.9 2.5 1.9-.9.7-2.1 1.2-3.3 1.2H0c1.2.8 2.6 1.2 4.1 1.2 4.9 0 7.6-4.1 7.6-7.6v-.3c.5-.4 1-.9 1.3-1.4z"/></svg>
<svg class="a" style="left:1838px;top:987px;" width="12" height="11" viewBox="0 0 12 11"><rect x="0.5" y="0" width="11" height="11" rx="1.2" fill="#1f3c72"/><rect x="2.2" y="4.2" width="1.7" height="5" fill="#f7f7f7"/><circle cx="3.05" cy="2.4" r="1" fill="#f7f7f7"/><path d="M5.2 4.2h1.6v.8c.3-.5.9-.9 1.7-.9 1.3 0 1.7.8 1.7 2v3.1H8.5V6.5c0-.6-.1-1.1-.7-1.1-.7 0-.9.5-.9 1.1v2.7H5.2z" fill="#f7f7f7"/></svg>
<svg class="a" style="left:1864px;top:987px;" width="14" height="11" viewBox="0 0 14 11"><rect x="0.3" y="1" width="13.4" height="9.2" rx="2.6" fill="#1f3c72"/><path d="M5.5 3.3v4.6l4-2.3z" fill="#f7f7f7"/></svg>
<svg class="a" style="left:1891px;top:986px;" width="10" height="13" viewBox="0 0 10 13"><path fill="#1f3c72" d="M6.2 12.5V7h1.9l.3-2.2H6.2V3.4c0-.6.2-1.1 1.1-1.1h1.2V.4C8.3.3 7.6.2 6.8.2 5.1.2 3.9 1.3 3.9 3.2v1.6H2V7h1.9v5.5z"/></svg>
<div class="a" style="left:0px;top:1007px;width:1919px;height:2px;background:#000;"></div>
<div class="a" style="left:170px;top:46px;width:12px;height:961px;background:linear-gradient(to right,rgba(0,0,0,0.07),rgba(0,0,0,0))"></div>
<div class="a" style="left:1320px;top:46px;width:599px;height:926px;background:#fff;box-shadow:-3px 0 9px rgba(0,0,0,0.13)"></div>
<svg class="a" style="left:1870.97px;top:60.77px;" width="24.07" height="24.07" viewBox="0 0 24 24"><path fill="#000" d="M15 5l-1.41 1.41L18.17 11H2V13h16.17l-4.59 4.59L15 19l7-7L15 5z"/></svg>
<div class="t" style="left:1355.50px;top:93.33px;font-size:23.00px;line-height:29px;color:#26457c;font-weight:400;transform:scaleX(0.9814);-webkit-text-stroke:0.5px currentColor;">Add maintenance</div>
<div class="a" style="left:1345px;top:129px;width:550px;height:450px;background:#eef5fd;border:2px solid #4a8ff6"></div>
<div class="a" style="left:1415px;top:201px;width:180px;height:35px;background:#fff;border-radius:2px;box-shadow:0 1px 3px rgba(0,0,0,0.18)"></div>
<div class="t" style="left:1429.53px;top:209.98px;font-size:14.50px;line-height:18px;color:#616161;font-weight:400;transform:scaleX(0.9240);-webkit-text-stroke:0.05px currentColor;">COID *</div>
<div class="a" style="left:1556px;top:211px;width:1px;height:15px;background:#cccccc;"></div>
<svg class="a" style="left:1568px;top:215px;" width="14" height="9" viewBox="0 0 14 9"><path d="M1.2 1.2 L7 7 L12.8 1.2" fill="none" stroke="#c2c2c2" stroke-width="1.8"/></svg>
<div class="a" style="left:1415px;top:281px;width:180px;height:37px;background:#fff;border:1px solid #d0d0d0;border-radius:2px"></div>
<div class="t" style="left:1429.60px;top:291.78px;font-size:14.50px;line-height:18px;color:#616161;font-weight:400;transform:scaleX(0.9125);-webkit-text-stroke:0.05px currentColor;">SID *</div>
<div class="t" style="left:1434.68px;top:342.82px;font-size:13.80px;line-height:17px;color:#666;font-weight:400;-webkit-text-stroke:0.05px currentColor;">Start Date *</div>
<div class="a" style="left:1420px;top:366px;width:180px;height:37px;background:#fff;border:1px solid #d0d0d0;border-radius:2px"></div>
<div class="t" style="left:1436.55px;top:374.59px;font-size:15.60px;line-height:20px;color:#35538e;font-weight:400;transform:scaleX(1.0382);-webkit-text-stroke:0.05px currentColor;">02/15/2022</div>
<svg class="a" style="left:1564px;top:376px;" width="16" height="17" viewBox="0 0 16 17"><g fill="#000"><rect x="0.6" y="2" width="14.8" height="14.4" rx="1" fill="none" stroke="#000" stroke-width="1.7"/><rect x="0.6" y="2" width="14.8" height="3.4"/><rect x="3.2" y="0" width="1.8" height="3"/><rect x="11" y="0" width="1.8" height="3"/></g></svg>
<svg class="a" style="left:1386.03px;top:373.88px;" width="23.94" height="23.94" viewBox="0 0 24 24"><path fill="#4a90f7" d="M19 3h-1V1h-2v2H8V1H6v2H5c-1.11 0-1.99.9-1.99 2L3 19c0 1.1.89 2 2 2h14c1.1 0 2-.9 2-2V5c0-1.1-.9-2-2-2zm0 16H5V8h14v11zM7 10h5v5H7z"/></svg>
<div class="t" style="left:1434.68px;top:414.72px;font-size:13.80px;line-height:17px;color:#666;font-weight:400;-webkit-text-stroke:0.05px currentColor;">Start Time *</div>
<div class="a" style="left:1420px;top:438px;width:180px;height:37px;background:#fff;border:1px solid #d0d0d0;border-radius:2px"></div>
<div class="t" style="left:1436.77px;top:446.69px;font-size:15.60px;line-height:20px;color:#35538e;font-weight:400;transform:scaleX(1.0494);word-spacing:2px;-webkit-text-stroke:0.05px currentColor;">11:12 AM</div>
<svg class="a" style="left:1565px;top:449px;" width="14" height="14" viewBox="0 0 14 14"><circle cx="7" cy="7" r="5.8" fill="none" stroke="#000" stroke-width="1.7"/><path d="M7 3.6 V7.2 L9.4 9.2" fill="none" stroke="#000" stroke-width="1.5"/></svg>
<div class="t" style="left:1684.22px;top:342.82px;font-size:13.80px;line-height:17px;color:#666;font-weight:400;transform:scaleX(0.9815);-webkit-text-stroke:0.05px currentColor;">End Date *</div>
<div class="a" style="left:1670px;top:366px;width:180px;height:37px;background:#fff;border:1px solid #d0d0d0;border-radius:2px"></div>
<div class="t" style="left:1686.55px;top:374.59px;font-size:15.60px;line-height:20px;color:#35538e;font-weight:400;transform:scaleX(1.0382);-webkit-text-stroke:0.05px currentColor;">02/16/2022</div>
<svg class="a" style="left:1814px;top:376px;" width="16" height="17" viewBox="0 0 16 17"><g fill="#000"><rect x="0.6" y="2" width="14.8" height="14.4" rx="1" fill="none" stroke="#000" stroke-width="1.7"/><rect x="0.6" y="2" width="14.8" height="3.4"/><rect x="3.2" y="0" width="1.8" height="3"/><rect x="11" y="0" width="1.8" height="3"/></g></svg>
<svg class="a" style="left:1636.03px;top:373.88px;" width="23.94" height="23.94" viewBox="0 0 24 24"><path fill="#4a90f7" d="M19 3h-1V1h-2v2H8V1H6v2H5c-1.11 0-1.99.9-1.99 2L3 19c0 1.1.89 2 2 2h14c1.1 0 2-.9 2-2V5c0-1.1-.9-2-2-2zm0 16H5V8h14v11zM7 10h5v5H7z"/></svg>
<div class="t" style="left:1684.20px;top:414.72px;font-size:13.80px;line-height:17px;color:#666;font-weight:400;-webkit-text-stroke:0.05px currentColor;">End Time *</div>
<div class="a" style="left:1670px;top:438px;width:180px;height:37px;background:#fff;border:1px solid #d0d0d0;border-radius:2px"></div>
<div class="t" style="left:1686.77px;top:446.69px;font-size:15.60px;line-height:20px;color:#35538e;font-weight:400;transform:scaleX(1.0494);word-spacing:2px;-webkit-text-stroke:0.05px currentColor;">11:12 AM</div>
<svg class="a" style="left:1815px;top:449px;" width="14" height="14" viewBox="0 0 14 14"><circle cx="7" cy="7" r="5.8" fill="none" stroke="#000" stroke-width="1.7"/><path d="M7 3.6 V7.2 L9.4 9.2" fill="none" stroke="#000" stroke-width="1.5"/></svg>
<svg class="a" style="left:1385.88px;top:445.83px;" width="23.94" height="23.94" viewBox="0 0 24 24"><path fill="#4a90f7" d="M11.99 2C6.47 2 2 6.48 2 12s4.47 10 9.99 10C17.52 22 22 17.52 22 12S17.52 2 11.99 2zM12 20c-4.42 0-8-3.58-8-8s3.58-8 8-8 8 3.58 8 8-3.58 8-8 8zm.5-13H11v6l5.25 3.15.75-1.23-4.5-2.67z"/></svg>
<svg class="a" style="left:1635.77px;top:445.27px;" width="24.67" height="24.67" viewBox="0 0 24 24"><path fill="#4a90f7" d="M21 10.12h-6.78l2.74-2.82c-2.73-2.7-7.15-2.8-9.88-.1-2.73 2.71-2.73 7.08 0 9.79s7.15 2.71 9.88 0C18.32 15.65 19 14.08 19 12.1h2c0 1.98-.88 4.55-2.64 6.29-3.51 3.48-9.21 3.48-12.72 0-3.5-3.47-3.53-9.11-.02-12.58s9.140-3.47 12.65 0L21 3v7.12zM12.5 8v4.25l3.5 2.08-.72 1.21L11 13V8h1.5z"/></svg>
<div class="t" style="left:1419.63px;top:498.38px;font-size:14.20px;line-height:18px;color:#3a5a92;font-weight:400;transform:scaleX(0.9460);-webkit-text-stroke:0.05px currentColor;">Repeat Weekly</div>
<div class="a" style="left:1516px;top:499px;width:16px;height:16px;border:1.6px solid #2f4c82;background:transparent"></div>
<div class="a" style="left:1345px;top:594px;width:550px;height:36px;background:#fdcf34;"></div>
<div class="t" style="left:1383.91px;top:603.18px;font-size:14.20px;line-height:18px;color:#2f4a7c;font-weight:400;transform:scaleX(1.0056);-webkit-text-stroke:0.55px currentColor;">This action will archive Open/Suppressed alerts with the same coid and sid</div>
<div class="a" style="left:1587px;top:660px;width:120px;height:35px;background:#fff;box-shadow:0 1px 3px rgba(0,0,0,0.25)"></div>
<div class="t" style="left:1622.61px;top:667.21px;font-size:17.00px;line-height:21px;color:#f1705f;font-weight:400;transform:scaleX(0.9251);-webkit-text-stroke:0.5px currentColor;">Cancel</div>
<div class="a" style="left:1737px;top:660px;width:120px;height:35px;background:#3cb862;box-shadow:0 1px 3px rgba(0,0,0,0.25)"></div>
<div class="t" style="left:1775.32px;top:667.21px;font-size:17.00px;line-height:21px;color:#fff;font-weight:700;transform:scaleX(0.9022);-webkit-text-stroke:0.1px currentColor;">Apply</div>
<div class="a" style="left:0px;top:0px;width:1919px;height:1px;background:#5a5a5a;"></div>
<div class="a" style="left:0px;top:1px;width:1919px;height:45px;background:#4a91fe;"></div>
<svg class="a" style="left:36px;top:2px;" width="46" height="36" viewBox="0 0 46 36"><g fill="#fff"><path d="M4.9 29.5 L12.8 21.1 L18.8 27.1 C16.3 30.6 12.8 32.3 9.6 32.1 C7.4 31.9 5.6 30.9 4.9 29.5 Z"/><path d="M14.9 19.3 C17.5 17 20.7 16.2 23.6 16.4 C25.8 16.6 27.4 17.5 28.6 18.7 L38 29.3 C35.8 31.3 33 32.2 30.4 32.1 C28 32 25.8 31 24.2 29.5 Z"/><path d="M30.3 4 L39.6 13.6 C41.7 15.8 42.9 18.5 42.9 21.2 C42.9 23.8 41.7 26 40.1 27.2 L29.6 16.6 C27.8 14.8 27 12.6 27 10.4 C27 8 28.4 5.5 30.3 4 Z"/></g></svg>
<div class="t" style="left:86.08px;top:11.57px;font-size:20.00px;line-height:25px;color:#fff;font-weight:400;transform:scaleX(1.5141);">Protera Arion</div>
<div class="t" style="left:268.95px;top:22.16px;font-size:10.50px;line-height:13px;color:#fff;font-weight:400;transform:scaleX(0.9108);">V2022.03</div>
<div class="t" style="left:317.41px;top:22.16px;font-size:10.50px;line-height:13px;color:#fff;font-weight:400;transform:scaleX(0.9313);">(Local)</div>
<div class="t" style="left:353.84px;top:22.16px;font-size:10.50px;line-height:13px;color:#fff;font-weight:400;transform:scaleX(1.0394);">[dev]</div>
<svg class="a" style="left:1208.09px;top:13.84px;" width="20.03" height="20.03" viewBox="0 0 24 24"><path fill="#fff" d="M12 7V3H2v18h20V7H12zM6 19H4v-2h2v2zm0-4H4v-2h2v2zm0-4H4V9h2v2zm0-4H4V5h2v2zm4 12H8v-2h2v2zm0-4H8v-2h2v2zm0-4H8V9h2v2zm0-4H8V5h2v2zm10 12h-8v-2h2v-2h-2v-2h2v-2h-2V9h8v10zm-2-8h-2v2h2v-2zm0 4h-2v2h2v-2z"/></svg>
<div class="t" style="left:1245.50px;top:14.53px;font-size:15.80px;line-height:20px;color:#fff;font-weight:400;transform:scaleX(0.9501);-webkit-text-stroke:0.6px currentColor;">PROT - Protera Technologies</div>
<svg class="a" style="left:1537.39px;top:13.24px;" width="22.80" height="22.80" viewBox="0 0 24 24"><path fill="#fff" d="M15.5 14h-.79l-.28-.27C15.41 12.59 16 11.11 16 9.5 16 5.91 13.09 3 9.5 3S3 5.910 3 9.5 5.91 16 9.5 16c1.61 0 3.09-.59 4.23-1.57l.27.28v.79l5 4.99L20.49 19l-4.99-5zm-6 0C7.01 14 5 11.99 5 9.5S7.01 5 9.5 5 14 7.01 14 9.5 11.99 14 9.5 14z"/></svg>
<svg class="a" style="left:1597.57px;top:13.98px;" width="20.55" height="20.55" viewBox="0 0 24 24"><path fill="#fff" d="M12 5.9c1.16 0 2.1.94 2.1 2.1s-.94 2.1-2.1 2.1S9.9 9.16 9.9 8s.94-2.1 2.1-2.1m0 9c2.97 0 6.1 1.46 6.1 2.1v1.1H5.9V17c0-.64 3.13-2.1 6.1-2.1M12 4C9.79 4 8 5.79 8 8s1.79 4 4 4 4-1.79 4-4-1.79-4-4-4zm0 9c-2.67 0-8 1.34-8 4v3h16v-3c0-2.66-5.33-4-8-4z"/></svg>
<div class="t" style="left:1631.15px;top:15.82px;font-size:13.50px;line-height:17px;color:#fff;font-weight:400;transform:scaleX(0.9662);">m.krallis@protera.com</div>
<svg class="a" style="left:1761.57px;top:14.26px;" width="21.25" height="21.25" viewBox="0 0 24 24"><path fill="#fff" d="M16.59 8.59L12 13.17 7.41 8.59 6 10l6 6 6-6z"/></svg>
<svg class="a" style="left:1812.81px;top:14.20px;" width="20.01" height="20.01" viewBox="0 0 24 24"><path fill="#fff" d="M11 23.59v-3.6c-5.01-.26-9-4.42-9-9.49C2 5.26 6.26 1 11.5 1S21 5.26 21 10.5c0 4.95-3.44 9.93-8.57 12.4l-1.43.69zM11.5 3C7.36 3 4 6.36 4 10.5S7.36 18 11.5 18H13v2.3c3.64-2.3 6-6.08 6-9.8C19 6.36 15.64 3 11.5 3zm-1 11.5h2v2h-2zm2-1.5h-2c0-3.25 3-3 3-5 0-1.1-.9-2-2-2s-2 .9-2 2h-2c0-2.21 1.79-4 4-4s4 1.79 4 4c0 2.5-3 2.75-3 5z"/></svg>
<div class="t" style="left:1847.43px;top:15.85px;font-size:14.00px;line-height:18px;color:#fff;font-weight:400;transform:scaleX(0.9598);">Help</div>
</body></html>
